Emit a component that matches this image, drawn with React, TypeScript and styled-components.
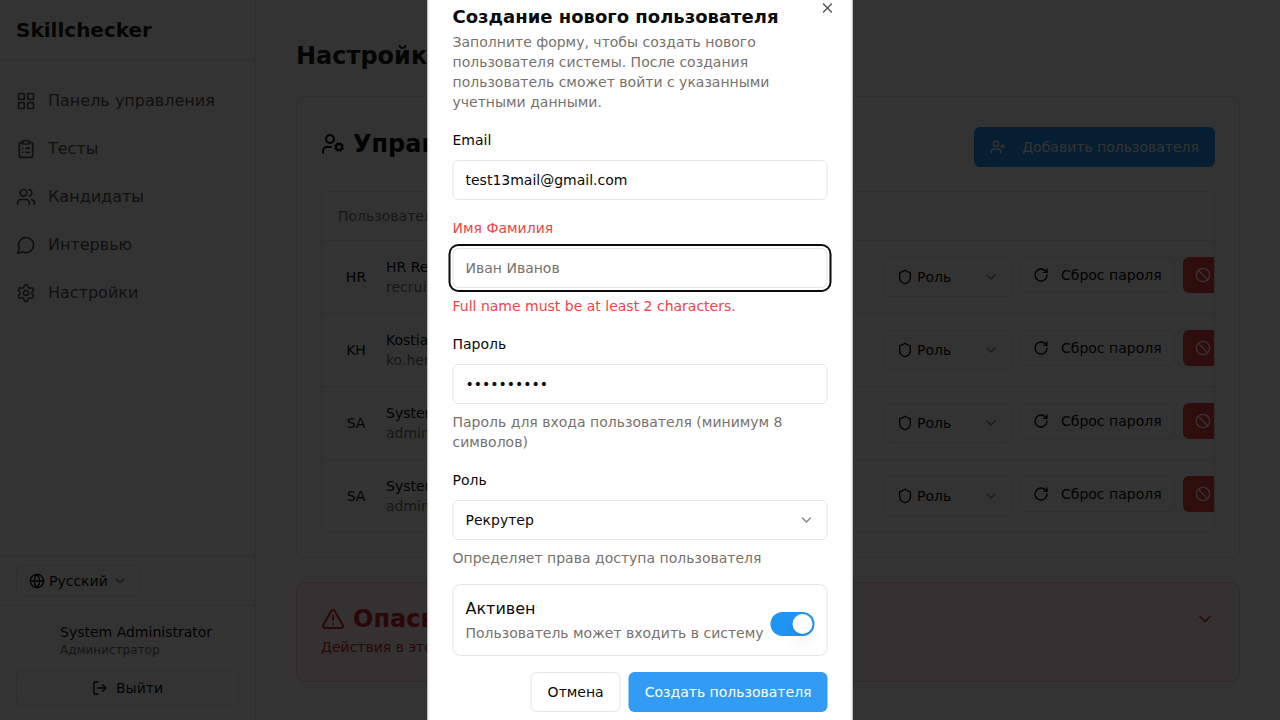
import React from "react";
import styled, { createGlobalStyle, css } from "styled-components";
import {
  LayoutGrid,
  ClipboardList,
  Users,
  Settings,
  Globe,
  ChevronDown,
  LogOut,
  UserCog,
  UserPlus,
  Shield,
  RotateCw,
  Ban,
  TriangleAlert,
  X,
} from "lucide-react";

const border = "#e5e5e5";
const muted = "#78716c";
const ink = "#0a0a0a";
const nav = "#57534e";
const blue = "#2094f3";
const red = "#ef4444";
const danger = "#dc2626";

const GlobalStyle = createGlobalStyle`
  *, *::before, *::after { box-sizing: border-box; }
  body {
    margin: 0;
    background: #fff;
    color: ${ink};
    font-family: "DejaVu Sans", sans-serif;
    font-size: 14px;
    line-height: 20px;
    overflow: hidden;
  }
  h1, h2, p { margin: 0; }
  button, input, select { font: inherit; color: inherit; }
  svg { flex: none; display: block; }
`;

const Layout = styled.div`
  display: flex;
  height: 100vh;
  overflow: hidden;
`;

const Sidebar = styled.aside`
  flex: none;
  width: 256px;
  display: flex;
  flex-direction: column;
  border-right: 1px solid ${border};
`;

const Brand = styled.div`
  padding: 16px;
  border-bottom: 1px solid ${border};
  font-size: 20px;
  line-height: 28px;
  font-weight: 700;
  color: #1c1917;
`;

const Nav = styled.nav`
  flex: 1;
  display: flex;
  flex-direction: column;
  gap: 8px;
  padding: 20px 8px;
`;

const NavLink = styled.a`
  display: flex;
  align-items: center;
  gap: 12px;
  height: 40px;
  padding: 0 8px;
  color: ${nav};
  font-size: 16px;
  line-height: 24px;
  text-decoration: none;
`;

const SideSection = styled.div`
  padding: 8px 16px;
  border-top: 1px solid ${border};
`;

const AccountSection = styled(SideSection)`
  padding: 16px 16px 14px;
`;

const buttonBase = css`
  display: inline-flex;
  align-items: center;
  justify-content: center;
  gap: 8px;
  border-radius: 6px;
  white-space: nowrap;
  border: 1px solid ${border};
  background: #fff;
`;

const LanguageButton = styled.button`
  ${buttonBase}
  gap: 4px;
  height: 32px;
  padding: 0 12px;
`;

const Profile = styled.div`
  padding-left: 44px;
  margin-bottom: 12px;
`;

const ProfileRole = styled.p`
  color: ${muted};
  font-size: 12px;
  line-height: 16px;
`;

const LogoutButton = styled.button`
  ${buttonBase}
  width: 100%;
  height: 36px;
`;

const Main = styled.main`
  flex: 1;
  min-width: 0;
  padding: 40px;
  display: flex;
  flex-direction: column;
  gap: 24px;
`;

const PageTitle = styled.h1`
  font-size: 24px;
  line-height: 32px;
  color: #1c1917;
`;

const Card = styled.section<{ $danger?: boolean }>`
  padding: 24px;
  border: 1px solid ${(p) => (p.$danger ? "#fecaca" : border)};
  border-radius: 8px;
  background: ${(p) => (p.$danger ? "#fef2f2" : "#fff")};
  ${(p) => p.$danger && css`color: ${danger};`}
`;

const CardHeader = styled.div`
  display: flex;
  justify-content: space-between;
  margin-bottom: 24px;
`;

const CardTitle = styled.h2`
  display: flex;
  align-items: center;
  gap: 8px;
  font-size: 24px;
  line-height: 24px;
  white-space: nowrap;
`;

const UsersHeader = styled(CardHeader)`
  height: 46px;
  align-items: flex-end;

  ${CardTitle} {
    align-self: center;
  }
`;

const DangerHeader = styled(CardHeader)`
  margin-bottom: 6px;
  align-items: center;
`;

const AddButton = styled.button`
  ${buttonBase}
  gap: 16px;
  height: 40px;
  padding: 0 16px;
  border: 0;
  background: ${blue};
  color: #fff;
`;

const TableWrap = styled.div`
  border: 1px solid ${border};
  border-radius: 6px;
  overflow: hidden;
`;

const Table = styled.table`
  width: 100%;
  border-collapse: collapse;
  table-layout: fixed;

  th {
    height: 48px;
    padding: 0 16px;
    text-align: left;
    font-weight: 400;
    color: ${muted};
  }

  td {
    height: 73px;
    padding: 0 16px;
    border-top: 1px solid ${border};
  }

  td + td {
    padding: 0;
  }
`;

const ActionsCol = styled.col`
  width: 330px;
`;

const Person = styled.div`
  display: flex;
  align-items: center;
  gap: 12px;
`;

const Avatar = styled.span`
  width: 36px;
  text-align: center;
`;

const MutedText = styled.p`
  color: ${muted};
`;

const Actions = styled.div`
  display: flex;
  gap: 8px;
  width: max-content;
`;

const RoleButton = styled.button`
  ${buttonBase}
  justify-content: space-between;
  width: 128px;
  height: 40px;
  padding: 0 12px;

  span {
    display: flex;
    align-items: center;
    gap: 4px;
  }
`;

const SmallButton = styled.button<{ $danger?: boolean }>`
  ${buttonBase}
  gap: 12px;
  height: 36px;
  padding: 0 12px;
  ${(p) =>
    p.$danger &&
    css`
      border: 0;
      background: ${red};
      color: #fff;
    `}
`;

const Overlay = styled.div`
  position: fixed;
  inset: 0;
  overflow: hidden;
  background: rgba(0, 0, 0, 0.8);
`;

const Dialog = styled.div`
  position: absolute;
  top: 50%;
  left: 50%;
  transform: translate(-50%, -50%);
  width: 425px;
  max-width: 100%;
  display: grid;
  gap: 16px;
  padding: 24px;
  border: 1px solid ${border};
  background: #fff;
`;

const CloseButton = styled.button`
  position: absolute;
  top: 16px;
  right: 16px;
  padding: 0;
  border: 0;
  background: none;
  opacity: 0.7;
`;

const DialogTitle = styled.h2`
  margin-bottom: 6px;
  font-size: 18px;
  line-height: 18px;
`;

const Form = styled.form`
  display: grid;
  gap: 16px;
`;

const Field = styled.div`
  display: grid;
  gap: 8px;
`;

const Label = styled.label<{ $error?: boolean }>`
  line-height: 24px;
  color: ${(p) => (p.$error ? red : ink)};
`;

const control = css`
  width: 100%;
  height: 40px;
  padding: 0 12px;
  border: 1px solid ${border};
  border-radius: 6px;
  background: #fff;
`;

const Input = styled.input<{ $focused?: boolean }>`
  ${control}
  outline: none;
  ${(p) => p.$focused && css`box-shadow: 0 0 0 2px #fff, 0 0 0 4px ${ink};`}

  &::placeholder {
    color: ${muted};
    opacity: 1;
  }
`;

const SelectWrap = styled.div`
  display: grid;
  align-items: center;

  > * {
    grid-area: 1 / 1;
  }

  > svg {
    justify-self: end;
    margin-right: 13px;
    opacity: 0.5;
    pointer-events: none;
  }
`;

const Select = styled.select`
  ${control}
  appearance: none;
`;

const ErrorText = styled.p`
  color: ${red};
`;

const SwitchCard = styled.div`
  display: flex;
  align-items: center;
  justify-content: space-between;
  padding: 12px;
  border: 1px solid ${border};
  border-radius: 8px;
`;

const SwitchLabel = styled.label`
  display: block;
  margin-bottom: 2px;
  font-size: 16px;
  line-height: 24px;
`;

const Switch = styled.input`
  appearance: none;
  flex: none;
  display: flex;
  justify-content: flex-end;
  width: 44px;
  height: 24px;
  margin: 8px 0 0;
  padding: 2px;
  border-radius: 12px;
  background: ${blue};

  &::before {
    content: "";
    width: 20px;
    height: 20px;
    border-radius: 50%;
    background: #fff;
    box-shadow: 0 10px 15px -3px rgba(0, 0, 0, 0.1), 0 4px 6px -4px rgba(0, 0, 0, 0.1);
  }
`;

const Footer = styled.div`
  display: flex;
  justify-content: flex-end;
  gap: 8px;
`;

const FormButton = styled.button<{ $primary?: boolean }>`
  ${buttonBase}
  height: 40px;
  padding: 0 16px;
  ${(p) =>
    p.$primary &&
    css`
      border: 0;
      background: #329cf4;
      color: #fff;
    `}
`;

function ChatIcon({ size }: { size: number }) {
  return (
    <svg
      width={size}
      height={size}
      viewBox="0 0 24 24"
      fill="none"
      stroke="currentColor"
      strokeWidth="2"
      strokeLinecap="round"
      strokeLinejoin="round"
    >
      <path d="M7.9 20A9 9 0 1 0 4 16.1L2 22Z" />
    </svg>
  );
}

const navItems = [
  { icon: LayoutGrid, text: "Панель управления" },
  { icon: ClipboardList, text: "Тесты" },
  { icon: Users, text: "Кандидаты" },
  { icon: ChatIcon, text: "Интервью" },
  { icon: Settings, text: "Настройки" },
];

const users = [
  { initials: "HR", name: "HR Recruiter", email: "recruiter@skillchecker.com" },
  { initials: "KH", name: "Kostia Her", email: "ko.her@gmail.com" },
  { initials: "SA", name: "System Admin", email: "admin@skillchecker.com" },
  { initials: "SA", name: "System Administrator", email: "admin@example.com" },
];

function UsersTable() {
  return (
    <TableWrap>
      <Table>
        <colgroup>
          <col />
          <ActionsCol />
        </colgroup>
        <thead>
          <tr>
            <th>Пользователь</th>
            <th aria-label="Действия" />
          </tr>
        </thead>
        <tbody>
          {users.map((user) => (
            <tr key={user.email}>
              <td>
                <Person>
                  <Avatar>{user.initials}</Avatar>
                  <div>
                    <p>{user.name}</p>
                    <MutedText>{user.email}</MutedText>
                  </div>
                </Person>
              </td>
              <td>
                <Actions>
                  <RoleButton>
                    <span>
                      <Shield size={16} />
                      Роль
                    </span>
                    <ChevronDown size={16} opacity={0.5} />
                  </RoleButton>
                  <SmallButton>
                    <RotateCw size={16} />
                    Сброс пароля
                  </SmallButton>
                  <SmallButton $danger aria-label="Заблокировать">
                    <Ban size={16} />
                  </SmallButton>
                </Actions>
              </td>
            </tr>
          ))}
        </tbody>
      </Table>
    </TableWrap>
  );
}

function CreateUserDialog() {
  return (
    <Overlay>
      <Dialog role="dialog" aria-modal="true" aria-labelledby="dialog-title">
        <div>
          <DialogTitle id="dialog-title">Создание нового пользователя</DialogTitle>
          <MutedText>
            Заполните форму, чтобы создать нового пользователя системы. После создания
            пользователь сможет войти с указанными учетными данными.
          </MutedText>
        </div>
        <Form>
          <Field>
            <Label htmlFor="email">Email</Label>
            <Input id="email" type="email" defaultValue="test13mail@gmail.com" />
          </Field>
          <Field>
            <Label htmlFor="name" $error>Имя Фамилия</Label>
            <Input id="name" placeholder="Иван Иванов" $focused />
            <ErrorText>Full name must be at least 2 characters.</ErrorText>
          </Field>
          <Field>
            <Label htmlFor="password">Пароль</Label>
            <Input id="password" type="password" defaultValue="password12" />
            <MutedText>Пароль для входа пользователя (минимум 8 символов)</MutedText>
          </Field>
          <Field>
            <Label htmlFor="role">Роль</Label>
            <SelectWrap>
              <Select id="role">
                <option>Рекрутер</option>
                <option>Администратор</option>
              </Select>
              <ChevronDown size={16} />
            </SelectWrap>
            <MutedText>Определяет права доступа пользователя</MutedText>
          </Field>
          <SwitchCard>
            <div>
              <SwitchLabel htmlFor="active">Активен</SwitchLabel>
              <MutedText>Пользователь может входить в систему</MutedText>
            </div>
            <Switch id="active" type="checkbox" role="switch" defaultChecked />
          </SwitchCard>
          <Footer>
            <FormButton type="button">Отмена</FormButton>
            <FormButton type="submit" $primary>Создать пользователя</FormButton>
          </Footer>
        </Form>
        <CloseButton aria-label="Закрыть">
          <X size={16} />
        </CloseButton>
      </Dialog>
    </Overlay>
  );
}

export default function App() {
  return (
    <>
      <GlobalStyle />
      <Layout>
        <Sidebar>
          <Brand>Skillchecker</Brand>
          <Nav>
            {navItems.map(({ icon: Icon, text }) => (
              <NavLink href="#" key={text}>
                <Icon size={20} />
                {text}
              </NavLink>
            ))}
          </Nav>
          <SideSection>
            <LanguageButton>
              <Globe size={16} />
              Русский
              <ChevronDown size={16} opacity={0.5} />
            </LanguageButton>
          </SideSection>
          <AccountSection>
            <Profile>
              <p>System Administrator</p>
              <ProfileRole>Администратор</ProfileRole>
            </Profile>
            <LogoutButton>
              <LogOut size={16} />
              Выйти
            </LogoutButton>
          </AccountSection>
        </Sidebar>
        <Main>
          <PageTitle>Настройки</PageTitle>
          <Card>
            <UsersHeader>
              <CardTitle>
                <UserCog size={24} />
                Управление пользователями
              </CardTitle>
              <AddButton>
                <UserPlus size={16} />
                Добавить пользователя
              </AddButton>
            </UsersHeader>
            <UsersTable />
          </Card>
          <Card $danger>
            <DangerHeader>
              <CardTitle>
                <TriangleAlert size={24} />
                Опасная зона
              </CardTitle>
              <ChevronDown size={20} />
            </DangerHeader>
            <p>Действия в этой зоне необратимы</p>
          </Card>
        </Main>
      </Layout>
      <CreateUserDialog />
    </>
  );
}
